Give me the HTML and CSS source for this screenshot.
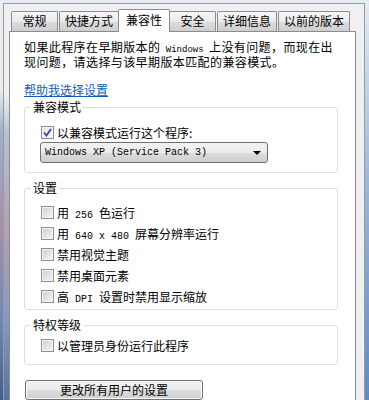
FILE: index.html
```html
<!DOCTYPE html>
<html lang="zh-CN">
<head>
    <meta charset="UTF-8">
    <meta name="viewport" content="width=device-width, initial-scale=1.0">
    <title>属性 - 兼容性</title>
    <link rel="stylesheet" href="styles.css">
</head>
<body>
    <div class="frame">
        <div class="dialog">
            <div class="tabs">
                <div class="tab tab-min">常规</div>
                <div class="tab">快捷方式</div>
                <div class="tab active">兼容性</div>
                <div class="tab tab-min">安全</div>
                <div class="tab">详细信息</div>
                <div class="tab">以前的版本</div>
            </div>
            <div class="panel">
                <p class="intro">如果此程序在早期版本的<span class="latin"> Windows </span>上没有问题，而现在出现问题，请选择与该早期版本匹配的兼容模式。</p>
                <a class="help" href="#">帮助我选择设置</a>

                <fieldset class="group group-mode">
                    <legend>兼容模式</legend>
                    <div class="rows">
                        <label class="check"><span class="box checked"><svg viewBox="0 0 9 9" width="9" height="9"><path d="M1 4.5 L3.5 7.5 L8 1" fill="none" stroke="#2c4c97" stroke-width="1.8"/></svg></span><span>以兼容模式运行这个程序:</span></label>
                        <div class="select">
                            <span class="mono">Windows XP (Service Pack 3)</span>
                            <span class="arrow"></span>
                        </div>
                    </div>
                </fieldset>

                <fieldset class="group">
                    <legend>设置</legend>
                    <div class="rows list">
                        <label class="check"><span class="box"></span><span>用<span class="mono"> 256 </span>色运行</span></label>
                        <label class="check"><span class="box"></span><span>用<span class="mono"> 640 x 480 </span>屏幕分辨率运行</span></label>
                        <label class="check"><span class="box"></span><span>禁用视觉主题</span></label>
                        <label class="check"><span class="box"></span><span>禁用桌面元素</span></label>
                        <label class="check"><span class="box"></span><span>高<span class="mono"> DPI </span>设置时禁用显示缩放</span></label>
                    </div>
                </fieldset>

                <fieldset class="group">
                    <legend>特权等级</legend>
                    <div class="rows list single">
                        <label class="check"><span class="box"></span><span>以管理员身份运行此程序</span></label>
                    </div>
                </fieldset>

                <button class="btn">更改所有用户的设置</button>
            </div>
        </div>
    </div>
</body>
</html>
```

FILE: styles.css
```css
html, body {
    margin: 0;
    height: 100%;
    overflow: hidden;
}
body {
    font-family: "Noto Sans CJK SC", "Liberation Sans", sans-serif;
    font-size: 12px;
    color: #000;
    background:
        linear-gradient(180deg, #e9ecf0 0, #e9ecf0 90px, #9fb0cc 130px, #a48ea8 230px, #6f88b6 320px, #41608f 100%) left top / 4px 100% no-repeat,
        linear-gradient(180deg, #e4ebf3 0%, #9bb8dc 45%, #5c8bc6 100%);
}
.frame {
    height: 100%;
    padding: 3px 4px 0 3px;
    box-sizing: border-box;
}
.dialog {
    height: 100%;
    background:
        linear-gradient(180deg, #f0f0f0 0, #f0f0f0 90px, #b4c0d6 130px, #b49fb4 230px, #8499c2 320px, #56739f 100%) left top / 5px 100% no-repeat,
        #f0f0f0;
    border-top: 1px solid #9a9a9a;
    border-left: 1px solid #9a9a9a;
    border-right: 1px solid #9a9a9a;
    padding: 5px 8px 0 5px;
    box-sizing: border-box;
    display: flex;
    flex-direction: column;
}
.tabs {
    display: flex;
    align-items: flex-end;
    height: 22px;
    padding-left: 2px;
    position: relative;
    z-index: 1;
    flex: none;
}
.tab {
    height: 19px;
    line-height: 18px;
    padding: 0 5px;
    text-align: center;
    border: 1px solid #898c95;
    border-bottom: none;
    background: linear-gradient(180deg, #f6f6f6 0%, #ebebeb 50%, #dddddd 51%, #cfcfcf 100%);
    border-radius: 2px 2px 0 0;
    margin-right: 1px;
    white-space: nowrap;
}
.tab-min {
    min-width: 35px;
}
.tab.active {
    height: 22px;
    line-height: 20px;
    background: #fff;
    margin: 0 -1px -1px -2px;
    padding: 0 7px;
}
.panel {
    flex: 1;
    overflow: hidden;
    background: #fff;
    border: 1px solid #898c95;
    border-bottom: none;
    padding: 8px 17px 0 14px;
}
.intro {
    margin: 0;
    line-height: 14px;
    letter-spacing: 0.4px;
}
.latin {
    font-family: "Liberation Mono", monospace;
    font-size: 9px;
    line-height: 1;
    letter-spacing: 0;
}
.mono {
    font-family: "Liberation Mono", monospace;
    font-size: 10px;
    line-height: 1;
    white-space: pre;
}
.help {
    display: inline-block;
    margin-top: 14px;
    color: #0f5dba;
    line-height: 14px;
    text-decoration: underline;
}
.group {
    margin: 0;
    padding: 0 0 0 6px;
    border: 1px solid #d5dfe5;
    border-radius: 3px;
}
.group legend {
    padding: 0 2px;
    line-height: 14px;
}
.group-mode {
    margin-top: 2px;
}
.group + .group {
    margin-top: 8px;
}
.rows {
    padding: 11px 0 9px 10px;
    display: flex;
    flex-direction: column;
    gap: 2px;
}
.rows.list {
    padding: 7px 0 2px 10px;
    gap: 0;
}
.rows.single {
    padding: 3px 0 8px 10px;
}
.check {
    display: flex;
    align-items: center;
    height: 15px;
    line-height: 15px;
    white-space: nowrap;
}
.list .check {
    height: 21px;
}
.box {
    width: 11px;
    height: 11px;
    border: 1px solid #8e8f8f;
    background: linear-gradient(135deg, #cbcfd5 0%, #f6f6f6 100%);
    box-shadow: inset 0 0 0 1px #f4f4f4;
    margin-right: 3px;
    display: flex;
    align-items: center;
    justify-content: center;
    flex: none;
}
.box.checked {
    background: linear-gradient(135deg, #dfe3ea 0%, #fafafa 100%);
}
.select {
    width: 216px;
    height: 19px;
    border: 1px solid #707070;
    border-radius: 3px;
    margin-left: -1px;
    background: linear-gradient(180deg, #f2f2f2 0%, #ebebeb 50%, #dddddd 51%, #cfcfcf 100%);
    display: flex;
    align-items: center;
    justify-content: space-between;
    padding: 0 6px 0 4px;
}
.select .mono {
    white-space: nowrap;
}
.arrow {
    width: 0;
    height: 0;
    border-left: 4px solid transparent;
    border-right: 4px solid transparent;
    border-top: 4px solid #000;
}
.btn {
    display: block;
    margin: 15px 0 0 1px;
    width: 178px;
    height: 20px;
    padding: 0;
    font-family: inherit;
    font-size: 12px;
    line-height: 18px;
    color: #000;
    border: 1px solid #707070;
    border-radius: 3px;
    background: linear-gradient(180deg, #f2f2f2 0%, #ebebeb 50%, #dddddd 51%, #cfcfcf 100%);
    box-shadow: inset 0 0 0 1px #fcfcfc;
}
```
